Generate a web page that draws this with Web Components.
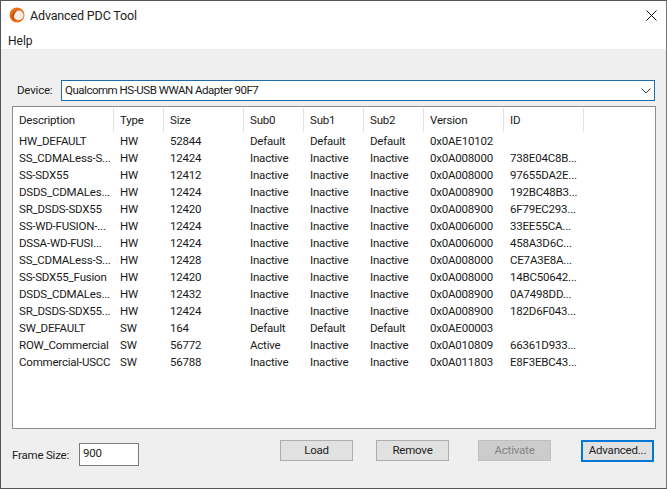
<!DOCTYPE html>
<html><head><meta charset="utf-8"><style>
html,body{margin:0;padding:0;background:#efefef}
body{font:11.5px/15px Roboto,"Noto Sans",sans-serif;letter-spacing:-.2px;color:#1a1a1a}
</style></head><body>
<pdc-window>
<pdc-titlebar title-text="Advanced PDC Tool"></pdc-titlebar>
<pdc-menubar><span>Help</span></pdc-menubar>
<pdc-device label="Device:" value="Qualcomm HS-USB WWAN Adapter 90F7"></pdc-device>
<pdc-list></pdc-list>
<pdc-footer>
<pdc-button>Load</pdc-button><pdc-button>Remove</pdc-button><pdc-button disabled>Activate</pdc-button><pdc-button focused>Advanced...</pdc-button>
</pdc-footer>
</pdc-window>
<script>
function def(name,css,html,init){customElements.define(name,class extends HTMLElement{
 constructor(){super();this.attachShadow({mode:'open'}).innerHTML='<style>'+css+'</style>'+html;}
 connectedCallback(){ if(init) init(this); }
});}
def('pdc-window',':host{display:flex;flex-direction:column;box-sizing:border-box;width:667px;height:489px;border:1px solid #555;border-right-color:#777;background:#efefef}','<slot></slot>');
def('pdc-titlebar',`:host{display:flex;align-items:center;box-sizing:border-box;height:30px;background:#fff;padding:0 0 2px 8px;flex:none}
 svg{flex:none}
 span{margin-left:5px;font-size:12.5px;color:#222;letter-spacing:-.15px}
 .x{margin-left:auto;margin-right:9px}`,
 '<svg width="16" height="16" viewBox="0 0 16 16"><circle cx="8" cy="8" r="7.5" fill="#e8701c"/><circle cx="9.600" cy="8.400" r="4.900" fill="#f3f0ea"/><path d="M2.600 9.500C3 5.500 6 3 10 3.200 7.500 4 5.600 6 5 9c-.3 2 .4 3.500 1.600 4.700C4.400 13.200 2.900 11.600 2.600 9.500z" fill="#c9540f"/></svg><span id="t"></span><svg class="x" width="11" height="11" viewBox="0 0 11 11"><path d="M.5.5l10 10M10.500.5l-10 10" stroke="#111" stroke-width="1" fill="none"/></svg>',
 el=>{el.shadowRoot.getElementById('t').textContent=el.getAttribute('title-text')});
def('pdc-menubar',`:host{display:flex;align-items:center;box-sizing:border-box;height:18px;background:#fff;padding:2px 0 0 7px;flex:none;font-size:12px;letter-spacing:0}`,'<slot></slot>');
def('pdc-device',`:host{display:flex;align-items:center;height:21px;margin:31px 11px 0 16px;flex:none}
 label{width:44px;flex:none;color:#222}
 .c{flex:1;display:flex;align-items:center;box-sizing:border-box;height:21px;border:1px solid #1f6ca8;background:#fff;padding:0 3px 0 3px}
 .c span{flex:1;letter-spacing:-.48px}`,
 '<label id="l"></label><div class="c"><span id="v"></span><svg width="10" height="6" viewBox="0 0 10 6"><path d="M.5.5L5 5 9.500.5" stroke="#444" fill="none"/></svg></div>',
 el=>{const s=el.shadowRoot;s.getElementById('l').textContent=el.getAttribute('label');s.getElementById('v').textContent=el.getAttribute('value');});
const cols=[101,50,80,60,60,60,80,80];
const heads=['Description','Type','Size','Sub0','Sub1','Sub2','Version','ID'];
const rows=[
['HW_DEFAULT','HW','52844','Default','Default','Default','0x0AE10102',''],
['SS_CDMALess-S...','HW','12424','Inactive','Inactive','Inactive','0x0A008000','738E04C8B...'],
['SS-SDX55','HW','12412','Inactive','Inactive','Inactive','0x0A008000','97655DA2E...'],
['DSDS_CDMALes...','HW','12424','Inactive','Inactive','Inactive','0x0A008900','192BC48B3...'],
['SR_DSDS-SDX55','HW','12420','Inactive','Inactive','Inactive','0x0A008900','6F79EC293...'],
['SS-WD-FUSION-...','HW','12424','Inactive','Inactive','Inactive','0x0A006000','33EE55CA...'],
['DSSA-WD-FUSI...','HW','12424','Inactive','Inactive','Inactive','0x0A006000','458A3D6C...'],
['SS_CDMALess-S...','HW','12428','Inactive','Inactive','Inactive','0x0A008000','CE7A3E8A...'],
['SS-SDX55_Fusion','HW','12420','Inactive','Inactive','Inactive','0x0A008000','14BC50642...'],
['DSDS_CDMALes...','HW','12432','Inactive','Inactive','Inactive','0x0A008900','0A7498DD...'],
['SR_DSDS-SDX55...','HW','12424','Inactive','Inactive','Inactive','0x0A008900','182D6F043...'],
['SW_DEFAULT','SW','164','Default','Default','Default','0x0AE00003',''],
['ROW_Commercial','SW','56772','Active','Inactive','Inactive','0x0A010809','66361D933...'],
['Commercial-USCC','SW','56788','Inactive','Inactive','Inactive','0x0A011803','E8F3EBC43...']];
const tpl=cols.map(c=>c+'px').join(' ');
def('pdc-list',`:host{display:block;box-sizing:border-box;flex:none;height:323px;margin:5px 10px 0 11px;border:1px solid #8c8c8c;background:#fff}
 .r{display:grid;grid-template-columns:${tpl};height:17px;align-items:center;white-space:nowrap}
 .r div{padding-left:6px}
 .h{height:24px;margin:1px 0 1px}
 .h div{height:24px;line-height:24px;border-right:1px solid #e3e3e3;box-sizing:border-box}`,
 '<div class="r h">'+heads.map(h=>'<div>'+h+'</div>').join('')+'</div>'+rows.map(r=>'<div class="r b">'+r.map(c=>'<div>'+c+'</div>').join('')+'</div>').join(''));
def('pdc-footer',`:host{display:flex;align-items:flex-start;flex:none;margin-top:11px;padding-right:12px}
 .f{display:flex;align-items:center;margin-left:11px;margin-top:3px;margin-right:141px;flex:none}
 label{width:67px;color:#222;padding-top:1px}
 .i{box-sizing:border-box;width:60px;height:23px;border:1px solid #7a7a7a;background:#fff;padding:0 0 3px 3px;display:flex;align-items:center}
 ::slotted(pdc-button:nth-of-type(1)){margin-right:23px}
 ::slotted(pdc-button:nth-of-type(2)){margin-right:29px}
 ::slotted(pdc-button:nth-of-type(3)){margin-right:30px}`,
 '<div class="f"><label>Frame Size:</label><div class="i">900</div></div><slot></slot>');
def('pdc-button',`:host{display:block;box-sizing:border-box;flex:none;width:73px;height:21px;border:1px solid #adadad;background:#e1e1e1;text-align:center;line-height:19px;color:#222}
 :host([disabled]){background:#cccccc;border-color:#bfbfbf;color:#838383}
 :host([focused]){border:2px solid #0078d7;line-height:17px;height:22px}`,'<slot></slot>');
</script>
</body></html>
